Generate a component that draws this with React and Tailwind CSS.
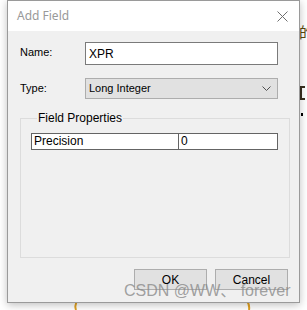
export default function App() {
  return (
    <div className="relative w-[307px] h-[310px] bg-white overflow-hidden font-['Liberation_Sans',Arial,sans-serif] text-[11px] text-black">
      {/* bits of the page behind the dialog */}
      <span className="absolute left-[299px] top-[24px] text-[15px] leading-none text-[#5a4a10] font-['Noto_Sans_CJK_SC',sans-serif]">的</span>
      <span className="absolute left-[300px] top-[86px] w-[5px] h-[14px] border-l-2 border-y-2 border-[#3a3020]" />
      <span className="absolute left-[301px] top-[113px] w-[2px] h-[3px] bg-black" />
      <svg className="absolute left-0 top-[296px]" width="307" height="14" viewBox="0 0 307 14">
        <path d="M78 4 Q74 8 76 14" fill="none" stroke="#e0a020" strokeWidth="2" />
        <path d="M132 6 h4" stroke="#e0a020" strokeWidth="2" />
        <path d="M156 6 h5" stroke="#e0a020" strokeWidth="2" />
        <path d="M246 4 Q250 8 249 14" fill="none" stroke="#e0a020" strokeWidth="2" />
      </svg>

      <div className="relative ml-[7px] w-[293px] h-[303px] border border-[#9a9a9a] bg-[#f0f0f0] shadow-[0_2px_8px_rgba(0,0,0,0.25)] flex flex-col">
        <div className="h-[30px] bg-white flex items-center justify-between pl-[9px] pr-[10px] shrink-0">
          <span className="font-['Noto_Sans',sans-serif] text-[12px] text-[#999999]">Add Field</span>
          <svg width="11" height="11" viewBox="0 0 11 11" className="mr-[1px]">
            <path d="M0.5 0.5 L10.5 10.5 M10.5 0.5 L0.5 10.5" stroke="#6f6f6f" strokeWidth="1" />
          </svg>
        </div>

        <div className="flex flex-col pt-[11px] pl-[12px] pr-[10px]">
          <div className="flex items-start">
            <span className="w-[65px] pt-[2px]">Name:</span>
            <div className="w-[193px] h-[23px] border border-[#7a7a7a] bg-white flex items-center pl-[3px] text-[12px]">XPR</div>
          </div>
          <div className="flex items-start mt-[13px]">
            <span className="w-[65px] pt-[2px]">Type:</span>
            <div className="w-[193px] h-[21px] border border-[#adadad] bg-[#e1e1e1] flex items-center justify-between pl-[3px] pr-[6px] text-[11px]">
              <span>Long Integer</span>
              <svg width="9" height="5" viewBox="0 0 9 5">
                <path d="M0.5 0.5 L4.5 4.5 L8.5 0.5" fill="none" stroke="#505050" strokeWidth="1" />
              </svg>
            </div>
          </div>

          <fieldset className="mt-[12px] w-[270px] h-[147px] border border-[#dcdcdc] px-[10px]">
            <legend className="ml-[6px] px-[1px] text-[12px] leading-[14px]">Field Properties</legend>
            <div className="mt-[8px] w-[247px] h-[17px] border border-[#646464] bg-white flex">
              <div className="w-[147px] border-r border-[#646464] pl-[2px] leading-[15px] text-[12px]">Precision</div>
              <div className="flex-1 pl-[2px] leading-[15px] text-[12px]">0</div>
            </div>
          </fieldset>

          <div className="flex justify-end gap-[8px] mt-[11px] pr-[1px]">
            <div className="w-[73px] h-[21px] border border-[#adadad] bg-[#e1e1e1] flex items-center justify-center text-[12px]">OK</div>
            <div className="w-[73px] h-[21px] border border-[#adadad] bg-[#e1e1e1] flex items-center justify-center text-[12px]">Cancel</div>
          </div>
        </div>

        <span className="absolute left-[116px] top-[282px] text-[16px] leading-none text-[#8a8a8a]/80 font-['Liberation_Sans','Noto_Sans_CJK_SC',sans-serif] whitespace-nowrap">CSDN @WW、 forever</span>
      </div>
    </div>
  );
}
